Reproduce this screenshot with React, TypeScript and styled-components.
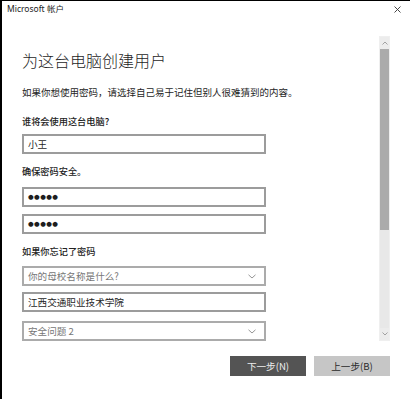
import React from "react";
import styled, { createGlobalStyle } from "styled-components";

const Global = createGlobalStyle`
  html, body { margin: 0; padding: 0; background: #fff; }
  body { font-family: "Noto Sans CJK SC", "Noto Sans", sans-serif; }
  * { box-sizing: border-box; }
`;

const cjk = `"Noto Sans CJK SC", "Noto Sans", sans-serif`;

const Window = styled.div`
  width: 410px;
  height: 399px;
  background: #fff;
  border-top: 1px solid #000;
  border-left: 2px solid #000;
  display: flex;
  flex-direction: column;
  overflow: hidden;
`;

const TitleBar = styled.div`
  height: 18px;
  display: flex;
  align-items: center;
  justify-content: space-between;
  padding: 0 9px 2px 5px;
`;

const TitleText = styled.span`
  font-family: "Noto Sans", ${cjk};
  font-size: 8.5px;
  color: #222;
  line-height: 12px;
`;

const Main = styled.div`
  height: 326px;
  display: flex;
  flex-direction: row;
`;

const Content = styled.div`
  flex: 1;
  padding-left: 20px;
  display: flex;
  flex-direction: column;
  align-items: flex-start;
`;

const Heading = styled.h1`
  margin: 30px 0 0;
  font-family: ${cjk};
  font-weight: 300;
  font-size: 16px;
  line-height: 22px;
  color: #1e1e1e;
  white-space: nowrap;
`;

const Desc = styled.p`
  margin: 14px 0 0;
  font-family: ${cjk};
  font-size: 9.5px;
  line-height: 14px;
  color: #1e1e1e;
  white-space: nowrap;
`;

const Label = styled.div<{ $top: number }>`
  margin-top: ${(p) => p.$top}px;
  font-family: ${cjk};
  font-weight: 500;
  font-size: 9.2px;
  line-height: 14px;
  color: #222;
  white-space: nowrap;
`;

const Field = styled.div<{ $top: number; $muted?: boolean }>`
  margin-top: ${(p) => p.$top}px;
  width: 244px;
  height: 20px;
  border: 2px solid ${(p) => (p.$muted ? "#ababab" : "#9c9c9c")};
  background: #fff;
  display: flex;
  align-items: center;
  justify-content: space-between;
  padding: 0 8px 0 4px;
  font-family: ${cjk};
  font-size: 9.6px;
  color: ${(p) => (p.$muted ? "#777" : "#1e1e1e")};
  white-space: nowrap;
`;

const Dots = styled.span`
  font-family: "DejaVu Sans", sans-serif;
  font-size: 6.5px;
  letter-spacing: 0.4px;
  color: #1e1e1e;
  line-height: 10px;
`;

const ScrollBar = styled.div`
  width: 11px;
  margin: 17px 20px 0 0;
  height: 305px;
  background: #e8e8e8;
  border: 1px solid #efefef;
  display: flex;
  flex-direction: column;
  align-items: stretch;
`;

const ArrowCell = styled.div`
  height: 12px;
  display: flex;
  align-items: center;
  justify-content: center;
  background: #ececec;
`;

const Thumb = styled.div`
  height: 181px;
  background: #ababab;
`;

const Track = styled.div`
  flex: 1;
`;

const Footer = styled.div`
  display: flex;
  justify-content: flex-end;
  gap: 8px;
  padding: 11px 20px 0 0;
`;

const Button = styled.div<{ $primary?: boolean }>`
  width: 76px;
  height: 20px;
  display: flex;
  align-items: center;
  justify-content: center;
  background: ${(p) => (p.$primary ? "#545454" : "#c6c6c6")};
  color: ${(p) => (p.$primary ? "#eeeeee" : "#2a2a2a")};
  font-family: ${cjk};
  font-size: 9.6px;
`;

const Chevron = () => (
  <svg width="8" height="5" viewBox="0 0 8 5">
    <polyline points="0.5,0.8 4,4 7.5,0.8" fill="none" stroke="#8a8a8a" strokeWidth="0.9" />
  </svg>
);

const Close = () => (
  <svg width="7" height="7" viewBox="0 0 7 7">
    <path d="M0.5 0.5 L6.5 6.5 M6.5 0.5 L0.5 6.5" stroke="#333" strokeWidth="0.9" />
  </svg>
);

const ArrowUp = () => (
  <svg width="6" height="4" viewBox="0 0 6 4">
    <polyline points="0.5,3.5 3,1 5.5,3.5" fill="none" stroke="#999" strokeWidth="0.9" />
  </svg>
);

const ArrowDown = () => (
  <svg width="6" height="4" viewBox="0 0 6 4">
    <polyline points="0.5,0.5 3,3 5.5,0.5" fill="none" stroke="#999" strokeWidth="0.9" />
  </svg>
);

export default function App() {
  return (
    <>
      <Global />
      <Window>
        <TitleBar>
          <TitleText>Microsoft 帐户</TitleText>
          <Close />
        </TitleBar>
        <Main>
          <Content>
            <Heading>为这台电脑创建用户</Heading>
            <Desc>如果你想使用密码，请选择自己易于记住但别人很难猜到的内容。</Desc>
            <Label $top={15}>谁将会使用这台电脑?</Label>
            <Field $top={6}>小王</Field>
            <Label $top={10}>确保密码安全。</Label>
            <Field $top={9}>
              <Dots>●●●●●</Dots>
            </Field>
            <Field $top={7}>
              <Dots>●●●●●</Dots>
            </Field>
            <Label $top={10}>如果你忘记了密码</Label>
            <Field $top={8} $muted>
              你的母校名称是什么?
              <Chevron />
            </Field>
            <Field $top={6}>江西交通职业技术学院</Field>
            <Field $top={9} $muted>
              安全问题 2
              <Chevron />
            </Field>
          </Content>
          <ScrollBar>
            <ArrowCell>
              <ArrowUp />
            </ArrowCell>
            <Thumb />
            <Track />
            <ArrowCell>
              <ArrowDown />
            </ArrowCell>
          </ScrollBar>
        </Main>
        <Footer>
          <Button $primary>下一步(N)</Button>
          <Button>上一步(B)</Button>
        </Footer>
      </Window>
    </>
  );
}
